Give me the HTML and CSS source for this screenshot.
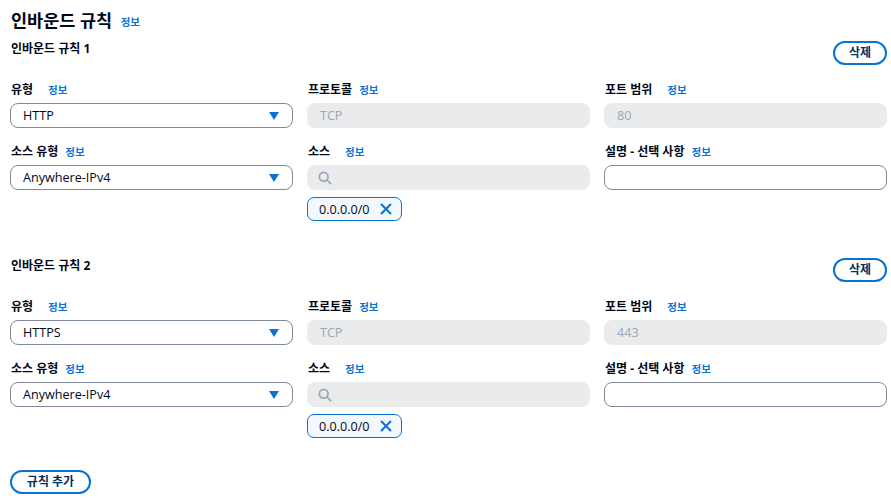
FILE: index.html
```html
<!DOCTYPE html>
<html lang="ko">
<head>
<meta charset="utf-8">
<link rel="stylesheet" href="styles.css">
</head>
<body>
<div class="page">
  <h1 class="title">인바운드 규칙 <a class="info info-title">정보</a></h1>

  <section class="rule">
    <div class="rule-head">
      <h2 class="rule-title">인바운드 규칙 1</h2>
      <button class="btn">삭제</button>
    </div>
    <div class="grid">
      <div class="field">
        <div class="label">유형<a class="info wide">정보</a></div>
        <div class="select"><span>HTTP</span><svg class="caret" width="10" height="8" viewBox="0 0 10 8"><path d="M0 0h10L5 8z" fill="#0972d3"/></svg></div>
      </div>
      <div class="field">
        <div class="label">프로토콜<a class="info narrow">정보</a></div>
        <div class="input disabled">TCP</div>
      </div>
      <div class="field">
        <div class="label">포트 범위<a class="info wide">정보</a></div>
        <div class="input disabled">80</div>
      </div>
      <div class="field">
        <div class="label">소스 유형<a class="info narrow">정보</a></div>
        <div class="select"><span>Anywhere-IPv4</span><svg class="caret" width="10" height="8" viewBox="0 0 10 8"><path d="M0 0h10L5 8z" fill="#0972d3"/></svg></div>
      </div>
      <div class="field">
        <div class="label">소스<a class="info wide">정보</a></div>
        <div class="input search"><svg width="14" height="14" viewBox="0 0 16 16"><circle cx="6.5" cy="6.5" r="5" fill="none" stroke="#9ba7b6" stroke-width="2"/><path d="M10 10l5 5" stroke="#9ba7b6" stroke-width="2"/></svg></div>
        <div class="token"><span>0.0.0.0/0</span><svg width="12" height="12" viewBox="0 0 12 12"><path d="M1 1l10 10M11 1L1 11" stroke="#0972d3" stroke-width="2"/></svg></div>
      </div>
      <div class="field">
        <div class="label">설명 - 선택 사항<a class="info narrow">정보</a></div>
        <div class="input"></div>
      </div>
    </div>
  </section>

  <section class="rule second">
    <div class="rule-head">
      <h2 class="rule-title">인바운드 규칙 2</h2>
      <button class="btn">삭제</button>
    </div>
    <div class="grid">
      <div class="field">
        <div class="label">유형<a class="info wide">정보</a></div>
        <div class="select"><span>HTTPS</span><svg class="caret" width="10" height="8" viewBox="0 0 10 8"><path d="M0 0h10L5 8z" fill="#0972d3"/></svg></div>
      </div>
      <div class="field">
        <div class="label">프로토콜<a class="info narrow">정보</a></div>
        <div class="input disabled">TCP</div>
      </div>
      <div class="field">
        <div class="label">포트 범위<a class="info wide">정보</a></div>
        <div class="input disabled">443</div>
      </div>
      <div class="field">
        <div class="label">소스 유형<a class="info narrow">정보</a></div>
        <div class="select"><span>Anywhere-IPv4</span><svg class="caret" width="10" height="8" viewBox="0 0 10 8"><path d="M0 0h10L5 8z" fill="#0972d3"/></svg></div>
      </div>
      <div class="field">
        <div class="label">소스<a class="info wide">정보</a></div>
        <div class="input search"><svg width="14" height="14" viewBox="0 0 16 16"><circle cx="6.5" cy="6.5" r="5" fill="none" stroke="#9ba7b6" stroke-width="2"/><path d="M10 10l5 5" stroke="#9ba7b6" stroke-width="2"/></svg></div>
        <div class="token"><span>0.0.0.0/0</span><svg width="12" height="12" viewBox="0 0 12 12"><path d="M1 1l10 10M11 1L1 11" stroke="#0972d3" stroke-width="2"/></svg></div>
      </div>
      <div class="field">
        <div class="label">설명 - 선택 사항<a class="info narrow">정보</a></div>
        <div class="input"></div>
      </div>
    </div>
  </section>

  <div class="footer">
    <button class="btn">규칙 추가</button>
  </div>
</div>
</body>
</html>
```
FILE: styles.css
```css
* { box-sizing: border-box; }
html, body { margin: 0; padding: 0; background: #fff; }
body {
  font-family: "Open Sans", "Noto Sans CJK KR", sans-serif;
  color: #000716;
  font-size: 12px;
}
.page { padding: 8px 4px 0 10px; }
.title {
  margin: 0;
  font-size: 17.5px;
  line-height: 24px;
  font-weight: 700;
  padding-left: 1px;
}
.info {
  color: #0972d3;
  font-size: 10.5px;
  font-weight: 700;
}
.info-title { margin-left: 4px; vertical-align: 1px; }
.rule { margin-top: 7px; }
.rule.second { margin-top: 37px; }
.rule-head {
  display: flex;
  justify-content: space-between;
  align-items: flex-start;
  height: 24px;
}
.rule-title {
  margin: 0;
  font-size: 12px;
  line-height: 16px;
  font-weight: 700;
  padding-left: 1px;
}
.btn {
  font-family: "Open Sans", "Noto Sans CJK KR", sans-serif;
  font-size: 12px;
  font-weight: 700;
  color: #033160;
  background: #fff;
  border: 2px solid #0972d3;
  border-radius: 14px;
  height: 24px;
  padding: 0 12px;
  line-height: 18px;
}
.rule-head .btn { width: 54px; padding: 0; }
.grid {
  margin-top: 17px;
  display: grid;
  grid-template-columns: repeat(3, 283px);
  column-gap: 14px;
  row-gap: 16px;
}
.label {
  font-size: 12px;
  font-weight: 700;
  line-height: 16px;
  margin-bottom: 5px;
  padding-left: 1px;
}
.info.wide { margin-left: 15px; }
.info.narrow { margin-left: 7px; }
.select, .input {
  height: 25px;
  border: 1px solid #7d8998;
  border-radius: 8px;
  display: flex;
  align-items: center;
  padding: 0 12px 0 12px;
  font-size: 12.6px;
}
.select { justify-content: space-between; padding-right: 13px; }
.input.disabled, .input.search {
  background: #e9ebed;
  border-color: #e9ebed;
  color: #9ba7b6;
}
.input.search { padding-left: 10px; }
.token {
  margin-top: 7px;
  width: 95px;
  height: 24px;
  border: 1px solid #0972d3;
  background: #f2f8fd;
  border-radius: 7px;
  display: flex;
  align-items: center;
  justify-content: space-between;
  padding: 0 9px 0 11px;
  font-size: 12.6px;
}
.footer { margin-top: 32px; }
.footer .btn { width: 81px; padding: 0; }
```
